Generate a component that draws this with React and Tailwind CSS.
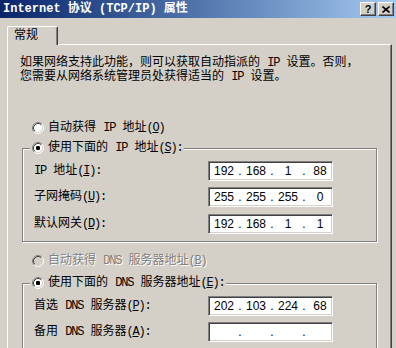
import React from 'react';

const FONT = "font-['Liberation_Mono','Noto_Sans_CJK_SC',monospace]";

// latin runs in SimSun are narrower than the mono face, pull them in a bit
const L = ({ children }) => <span className="tracking-[-1.2px]">{children}</span>;

const Radio = ({ checked, disabled }) => (
  <svg width="12" height="12" viewBox="0 0 12 12" className="shrink-0">
    <circle cx="6" cy="6" r="5" fill={disabled ? '#d4d0c8' : '#ffffff'} />
    <path d="M2.11 9.89 A5.5 5.5 0 0 1 9.89 2.11" fill="none" stroke="#808080" />
    <path d="M9.89 2.11 A5.5 5.5 0 0 1 2.11 9.89" fill="none" stroke="#ffffff" />
    <path d="M2.82 9.18 A4.5 4.5 0 0 1 9.18 2.82" fill="none" stroke="#404040" />
    <path d="M9.18 2.82 A4.5 4.5 0 0 1 2.82 9.18" fill="none" stroke="#d4d0c8" />
    {checked && <rect x="4" y="4" width="4" height="4" rx="1.2" fill="#000000" />}
  </svg>
);

const IpBox = ({ parts }) => (
  <div className="w-[125px] h-[20px] bg-white border border-t-[#808080] border-l-[#808080] border-b-white border-r-white shadow-[inset_1px_1px_0_#404040,inset_-1px_-1px_0_#d4d0c8] flex items-center pl-[3px] font-['Liberation_Sans',sans-serif] text-[12px] leading-[14px]">
    {[0, 1, 2, 3].map(i => (
      <React.Fragment key={i}>
        <span className="w-[24px] text-center">{parts ? parts[i] : ''}</span>
        {i < 3 && <span className="w-[8px] text-center">.</span>}
      </React.Fragment>
    ))}
  </div>
);

const Row = ({ label, parts, className = '' }) => (
  <div className={`flex items-center h-[20px] ${className}`}>
    <div className="w-[174px] whitespace-nowrap">{label}</div>
    <IpBox parts={parts} />
  </div>
);

const GroupBox = ({ legend, children, className = '' }) => (
  <div className={`relative ml-[14px] w-[355px] border border-[#808080] shadow-[inset_1px_1px_0_#ffffff,1px_1px_0_#ffffff] ${className}`}>
    <div className="absolute top-[-8px] left-[7px] h-[14px] flex items-center gap-[4px] bg-[#d4d0c8] px-[2px] whitespace-nowrap">
      {legend}
    </div>
    {children}
  </div>
);

const TitleBar = () => (
  <div className="h-[18px] flex items-center justify-between bg-gradient-to-r from-[#0a246a] to-[#a6caf0] pl-[3px] pr-[2px]">
    <span className="text-white font-bold text-[12px] leading-[14px] whitespace-nowrap">
      Internet 协议 (TCP/IP) 属性
    </span>
    <div className="flex gap-[2px]">
      <div className="w-[16px] h-[14px] bg-[#d4d0c8] border border-t-white border-l-white border-b-[#404040] border-r-[#404040] shadow-[inset_-1px_-1px_0_#808080] flex items-center justify-center font-['Liberation_Sans',sans-serif] font-bold text-[11px] leading-none">
        ?
      </div>
      <div className="w-[16px] h-[14px] bg-[#d4d0c8] border border-t-white border-l-white border-b-[#404040] border-r-[#404040] shadow-[inset_-1px_-1px_0_#808080] flex items-center justify-center">
        <svg width="8" height="7" viewBox="0 0 8 7">
          <path d="M0.5 0.5 L7.5 6.5 M7.5 0.5 L0.5 6.5" stroke="#000" strokeWidth="1.6" />
        </svg>
      </div>
    </div>
  </div>
);

export default function App() {
  return (
    <div className={`w-[396px] h-[348px] overflow-hidden bg-[#d4d0c8] text-black text-[12px] leading-[14px] ${FONT}`}>
      <TitleBar />

      <div className="pt-[8px] pl-[7px]">
        {/* Tab */}
        <div className="relative z-10 w-[51px] h-[19px] -mb-px bg-[#d4d0c8] border-l border-t border-white border-r border-r-[#404040] shadow-[inset_-1px_0_0_#808080] rounded-t-[2px] pl-[6px] pt-[2px]">
          常规
        </div>

        {/* Panel */}
        <div className="w-[385px] h-[320px] border-l border-t border-white border-r border-r-[#404040] shadow-[inset_-1px_0_0_#808080]">
          <p className="pt-[11px] pl-[12px] whitespace-nowrap">
            如果网络支持此功能，则可以获取自动指派的 <L>IP</L> 设置。否则，<br />
            您需要从网络系统管理员处获得适当的 <L>IP</L> 设置。
          </p>

          <div className="mt-[37px] pl-[24px] h-[14px] flex items-center gap-[4px] whitespace-nowrap">
            <Radio />
            <span>自动获得 <L>IP</L> 地址<L>(<u>O</u>)</L></span>
          </div>

          <GroupBox
            className="mt-[13px] pt-[12px] pl-[11px] pb-[7px]"
            legend={<><Radio checked /><span>使用下面的 <L>IP</L> 地址<L>(<u>S</u>):</L></span></>}
          >
            <Row label={<><L>IP</L> 地址<L>(<u>I</u>):</L></>} parts={['192', '168', '1', '88']} />
            <Row className="mt-[6px]" label={<>子网掩码<L>(<u>U</u>):</L></>} parts={['255', '255', '255', '0']} />
            <Row className="mt-[7px]" label={<>默认网关<L>(<u>D</u>):</L></>} parts={['192', '168', '1', '1']} />
          </GroupBox>

          <div className="mt-[12px] pl-[24px] h-[14px] flex items-center gap-[4px] whitespace-nowrap text-[#808080] [text-shadow:1px_1px_0_#ffffff]">
            <Radio disabled />
            <span>自动获得 <L>DNS</L> 服务器地址<L>(<u>B</u>)</L></span>
          </div>

          <GroupBox
            className="mt-[15px] pt-[12px] pl-[11px] pb-[20px]"
            legend={<><Radio checked /><span>使用下面的 <L>DNS</L> 服务器地址<L>(<u>E</u>):</L></span></>}
          >
            <Row label={<>首选 <L>DNS</L> 服务器<L>(<u>P</u>):</L></>} parts={['202', '103', '224', '68']} />
            <Row className="mt-[6px]" label={<>备用 <L>DNS</L> 服务器<L>(<u>A</u>):</L></>} />
          </GroupBox>
        </div>
      </div>
    </div>
  );
}
